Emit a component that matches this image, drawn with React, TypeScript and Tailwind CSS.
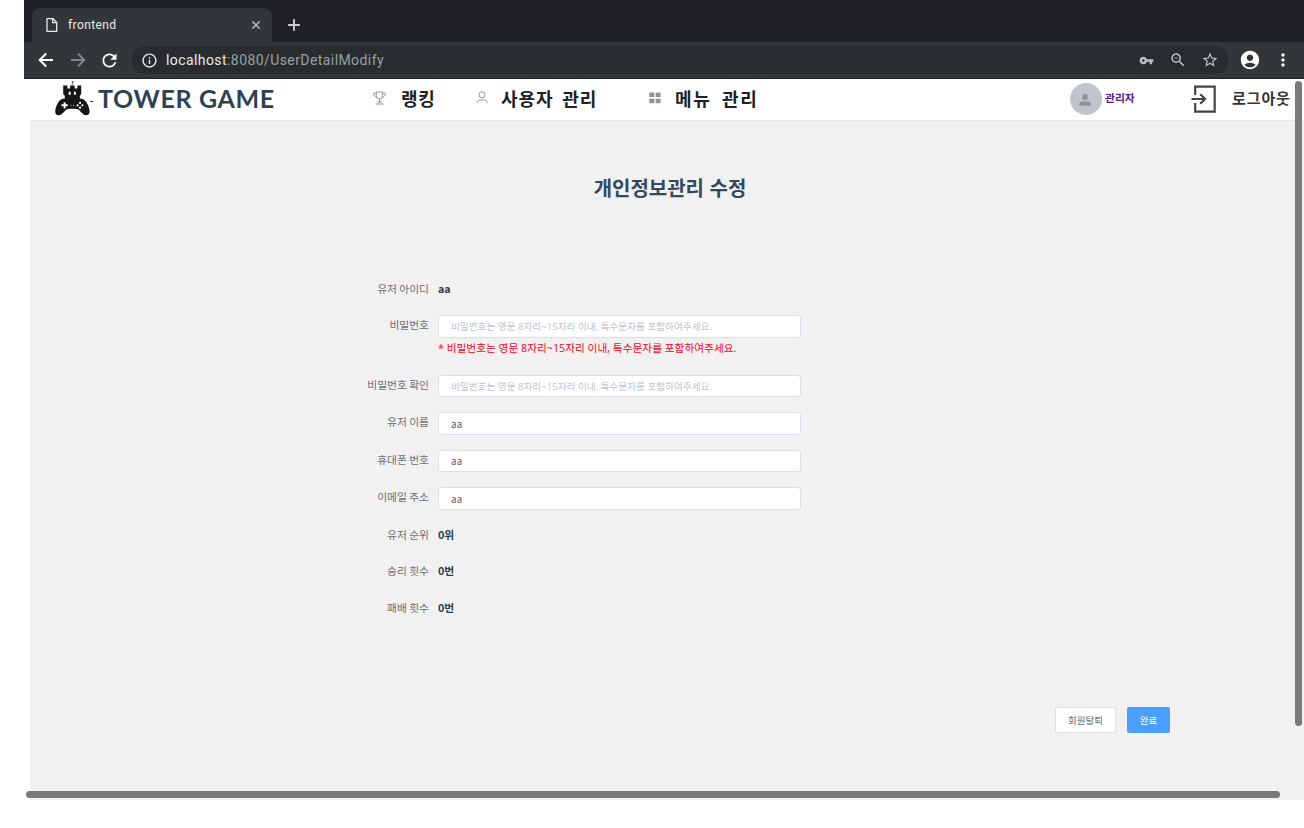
import React from "react";
import { MdRefresh, MdInfoOutline, MdVpnKey, MdZoomOut, MdStarBorder, MdAccountCircle, MdMoreVert } from "react-icons/md";

const HINT = "비밀번호는 영문 8자리~15자리 이내, 특수문자를 포함하여주세요.";

function LineIcon({ d, className, width }: { d: string; className: string; width: number }) {
  return (
    <svg className={`shrink-0 ${className}`} viewBox="0 0 20 20" fill="none" stroke="currentColor" strokeWidth={width}>
      <path d={d} />
    </svg>
  );
}

function BrowserChrome() {
  return (
    <div className="h-[79px] shrink-0 bg-[#202124] font-['Roboto',sans-serif]">
      <div className="flex h-[42px] items-end pl-2">
        <div className="flex h-[34px] w-[240px] items-center rounded-t-lg bg-[#323639] pl-[14px] pr-[10px] text-[#e8eaed]">
          <svg width="12" height="16" viewBox="0 0 12 16" fill="none" stroke="currentColor" strokeWidth="1.3">
            <path d="M1 1.7h6l3.7 3.7v9H1zM6.6 1.7v4h4" />
          </svg>
          <span className="ml-[10px] text-[12px] leading-4 tracking-[0.4px]">frontend</span>
          <LineIcon d="M4 4l12 12M16 4l-12 12" width={2.4} className="ml-auto size-3 text-[#bdc1c6]" />
        </div>
        <LineIcon d="M10 3.500v13M3.500 10h13" width={2.2} className="mb-[8px] ml-[13px] size-[18px] text-[#c7cacd]" />
      </div>
      <div className="flex h-[37px] items-center border-b border-[#202124] bg-[#323639] pl-[12px] text-white">
        <LineIcon d="M17 10H4M10.200 3.500L3.700 10l6.500 6.500" width={2} className="size-5" />
        <LineIcon d="M3 10h13M9.800 3.500l6.500 6.500-6.500 6.500" width={1.8} className="ml-[12px] size-5 text-[#85888b]" />
        <MdRefresh className="ml-[11px] size-[21px]" />
        <div className="ml-[12px] flex h-7 w-[1096px] items-center rounded-full bg-[#282c2f] pl-[9px] pr-[9px] text-[#bdc1c6]">
          <MdInfoOutline className="size-[17px] text-[#e8eaed]" />
          <span className="ml-2 text-[14px] leading-5 tracking-[0.42px] text-[#9aa0a6]">
            <span className="text-[#e8eaed]">localhost</span>:8080/UserDetailModify
          </span>
          <MdVpnKey className="ml-auto size-[15px]" />
          <MdZoomOut className="ml-[15px] size-[18px]" />
          <MdStarBorder className="ml-[14px] size-[18px]" />
        </div>
        <MdAccountCircle className="ml-[11px] size-[22px]" />
        <MdMoreVert className="ml-[12px] size-[20px]" />
      </div>
    </div>
  );
}

function TowerLogo() {
  return (
    <svg className="shrink-0" width="36" height="36" viewBox="0 0 36 36">
      <path d="M18.3 5V1" stroke="#444" strokeWidth=".8" />
      <path d="M18.5 1l2 .7-2 1" fill="#444" />
      <path fill="#151515" d="M9.2 5.500h4.200v3h2.700v-3h4.600v3h2.700v-3h3.800v8.600l-1.400 2v2.300c4.300.1 6.300 2.600 8 6.400 1.600 3.500 3.200 9-.4 10.300-3.800 1.100-6.400-3.400-8.800-5.600-1.200-1.100-11-1.100-12.200 0C9.800 31.700 7.200 36.200 3.400 35.100-.2 33.800 1.400 28.300 3 24.800c1.700-3.800 3.700-6.300 7.800-6.400v-2.300l-1.600-2z" />
      <path fill="#fff" d="M14.700 12.800c0-1.600 2-1.600 2 0v2h-2zM19.900 12.800c0-1.600 2-1.600 2 0v2h-2z" />
      <path d="M7.500 25.300h6.200M10.600 22.200v6.200" stroke="#fff" strokeWidth="1.900" />
      <g fill="#fff">
        <circle cx="26" cy="22.900" r="1.100" /><circle cx="26" cy="27.700" r="1.100" />
        <circle cx="23.600" cy="25.300" r="1.100" /><circle cx="28.400" cy="25.300" r="1.100" />
        <circle cx="17" cy="25.300" r=".5" /><circle cx="19.600" cy="25.300" r=".5" />
      </g>
    </svg>
  );
}

const TrophyIcon = () => (
  <svg className="shrink-0" width="13" height="14" viewBox="0 0 13 14" fill="none" stroke="#909399" strokeWidth="1">
    <path d="M3.300 1h6.400v3.700a3.200 3.200 0 0 1-6.400 0zM3.300 2.200H.7C.7 4.600 1.600 6 3.700 6M9.700 2.200h2.600c0 2.400-.9 3.800-3 3.800M6.500 8v4M4.300 11h4.400M2.600 13h7.800" />
  </svg>
);
const UserIcon = () => (
  <svg className="shrink-0" width="12" height="13" viewBox="0 0 12 13" fill="none" stroke="#909399" strokeWidth="1">
    <circle cx="6" cy="3.800" r="3" />
    <path d="M1 12.300v-.8c0-1.600 1.100-2.500 2.700-2.500h4.600c1.600 0 2.700.9 2.700 2.500v.8" />
  </svg>
);
const GridIcon = () => (
  <svg className="shrink-0" width="12" height="12" viewBox="0 0 12 12" fill="#909399">
    <rect x=".3" y=".5" width="5" height="4.600" rx=".6" /><rect x="6.600" y=".5" width="5" height="4.600" rx=".6" />
    <rect x=".3" y="6.700" width="5" height="4.600" rx=".6" /><rect x="6.600" y="6.700" width="5" height="4.600" rx=".6" />
  </svg>
);
const ExitIcon = () => (
  <svg className="shrink-0" width="26" height="28" viewBox="0 0 26 28" fill="none" stroke="#454545" strokeWidth="2.200">
    <path d="M4.200 10V1.600h19.500v25H4.200V18M.5 14H14M9.300 9.200l4.800 4.800-4.800 4.800" />
  </svg>
);
const AvatarIcon = () => (
  <svg className="mt-px mr-[3px]" width="12" height="12" viewBox="0 0 12 12" fill="#909399">
    <circle cx="6" cy="3" r="2.900" />
    <path d="M.3 11.700V10c0-1.600 1.500-2.400 3-2.400h5.400c1.500 0 3 .8 3 2.400v1.700z" />
  </svg>
);

function Header() {
  return (
    <header className="flex h-[42px] shrink-0 items-start border-b border-[#e6e6e6] bg-white pl-[24px] text-[#202124]">
      <div className="flex h-full w-[319px] items-start pt-px">
        <TowerLogo />
        <span className="mt-[21px] h-px w-[3px] bg-[#551a8b]" />
        <span className="ml-[5px] mt-[3px] whitespace-nowrap font-['Lato',sans-serif] text-[25px] font-bold leading-[30px] tracking-[0.650px] text-[#2f4254]">TOWER GAME</span>
      </div>
      <nav className="flex h-[37px] w-[697px] items-center whitespace-nowrap text-[18px] font-bold leading-6">
        <span className="flex w-[103px] items-center gap-[15px] tracking-[0.800px]"><TrophyIcon />랭킹</span>
        <span className="flex w-[173px] items-center gap-[13px] tracking-[0.900px]"><UserIcon /><span className="[word-spacing:4px]">사용자 관리</span></span>
        <span className="flex items-center gap-[14px] tracking-[1.600px]"><GridIcon /><span className="[word-spacing:5px]">메뉴 관리</span></span>
      </nav>
      <div className="flex h-10 w-[121px] items-center">
        <span className="flex size-8 items-center justify-center rounded-full bg-[#c0c4cc]"><AvatarIcon /></span>
        <span className="ml-[3px] mb-[2px] text-[10.750px] font-bold text-[#551a8b]">관리자</span>
      </div>
      <div className="flex h-[39px] items-center whitespace-nowrap">
        <ExitIcon />
        <span className="ml-[15px] mb-px text-[15px] font-bold tracking-[0.900px] text-[#333]">로그아웃</span>
      </div>
    </header>
  );
}

type FieldProps = { label: string; height: string; hint?: boolean; value?: string; text?: string; tall?: boolean };

function Field({ label, height, hint, value, text, tall }: FieldProps) {
  return (
    <div className={`flex shrink-0 ${height}`}>
      <label className={`w-[399px] shrink-0 text-right text-[10.750px] text-[#6c6e72] ${text ? "leading-[22px]" : "leading-[20px]"}`}>{label}</label>
      <div className="ml-[9px]">
        {text ? (
          <p className="text-[10.750px] font-bold leading-[22px] text-[#2c3e50]">{text}</p>
        ) : (
          <>
            <input
              defaultValue={value}
              placeholder={hint ? HINT : undefined}
              className={`block w-[363px] rounded-[3px] border border-[#dcdfe6] bg-white px-3 text-[#606266] outline-none placeholder:text-[#c0c4cc] ${value ? "text-[9.700px] tracking-[0.3px]" : "font-['Open_Sans','Noto_Sans_CJK_KR',sans-serif] text-[9.650px]"} ${value && tall ? "pt-px" : ""} ${tall ? "h-[23px]" : "h-[22px]"}`}
            />
            {label === "비밀번호" && <p className="font-['Open_Sans','Noto_Sans_CJK_KR',sans-serif] text-[10.700px] leading-[20px] text-[#ff0018]">* {HINT}</p>}
          </>
        )}
      </div>
    </div>
  );
}

export default function App() {
  return (
    <div className="h-[828px] w-[1304px] overflow-hidden bg-white pl-6 font-['Noto_Sans_CJK_KR',sans-serif]">
      <div className="relative flex h-[800px] w-[1280px] flex-col">
        <BrowserChrome />
        <div className="ml-[6px] flex min-h-0 flex-1 flex-col">
          <Header />
          <main className="flex min-h-0 flex-1 flex-col bg-[#f1f1f1]">
            <h1 className="mt-[52px] h-[105px] pl-[6px] text-center text-[20px] font-bold leading-[30px] text-[#34495e] [word-spacing:1px]">개인정보관리 수정</h1>
            <form className="flex h-[429px] flex-col" onSubmit={(e) => e.preventDefault()}>
              <Field label="유저 아이디" text="aa" height="h-[37px]" />
              <Field label="비밀번호" hint tall height="h-[60px]" />
              <Field label="비밀번호 확인" hint height="h-[37px]" />
              <Field label="유저 이름" value="aa" tall height="h-[38px]" />
              <Field label="휴대폰 번호" value="aa" height="h-[37px]" />
              <Field label="이메일 주소" value="aa" tall height="h-[37px]" />
              <Field label="유저 순위" text="0위" height="h-[36px]" />
              <Field label="승리 횟수" text="0번" height="h-[37px]" />
              <Field label="패배 횟수" text="0번" height="h-[37px]" />
            </form>
            <div className="flex justify-end gap-[11px] pr-[134px] text-[9.500px] leading-none">
              <button className="h-[26px] w-[61px] rounded-[2px] border border-[#dcdfe6] bg-white pt-px text-[#606266]">회원탈퇴</button>
              <button className="h-[26px] w-[43px] rounded-[2px] bg-[#4a9eff] pt-px text-white">완료</button>
            </div>
          </main>
        </div>
        <div className="absolute left-[1271px] top-[81px] h-[645px] w-[7px] rounded-full bg-[#797979]" />
        <div className="absolute left-[2px] top-[791px] h-[7px] w-[1254px] rounded-full bg-[#797979]" />
      </div>
    </div>
  );
}
